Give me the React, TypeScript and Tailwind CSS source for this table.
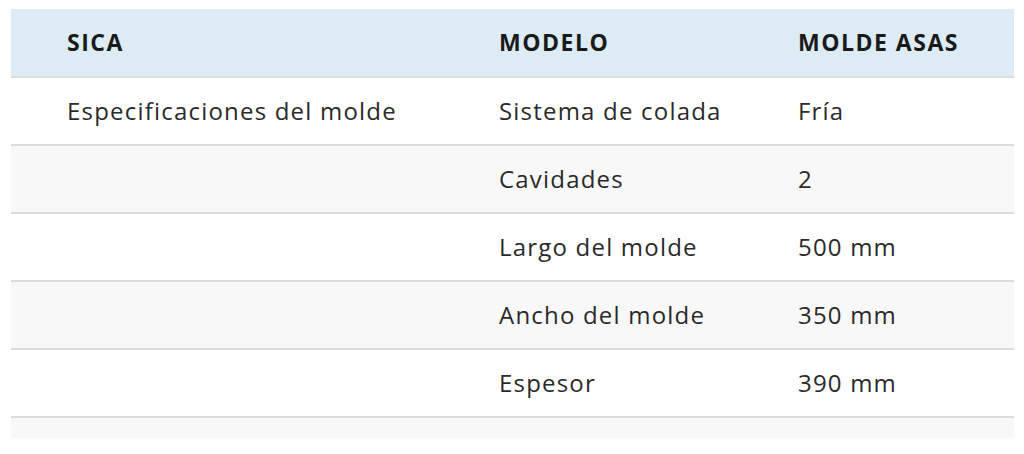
import React from "react";

const rows: [string, string, string][] = [
  ["Especificaciones del molde", "Sistema de colada", "Fría"],
  ["", "Cavidades", "2"],
  ["", "Largo del molde", "500 mm"],
  ["", "Ancho del molde", "350 mm"],
  ["", "Espesor", "390 mm"],
];

export default function App() {
  return (
    <div
      className="w-[1024px] h-[454px] bg-white pt-[9px] pl-[11px]"
      style={{ fontFamily: "'Open Sans', Lato, sans-serif" }}
    >
      <div className="w-[1003px] text-[#222222]">
        <div className="grid grid-cols-[432px_299px_272px] h-[69px] bg-[#dcebf4] border-b-2 border-[#dcdcdc] items-center text-[23px] leading-none font-bold tracking-[1.5px] text-[#1a1a1a]">
          <div className="pl-[56px]">SICA</div>
          <div className="pl-[56px]">MODELO</div>
          <div className="pl-[56px]">MOLDE ASAS</div>
        </div>
        {rows.map((r, i) => (
          <div
            key={i}
            className={`grid grid-cols-[432px_299px_272px] h-[68px] border-b-2 border-[#dcdcdc] items-center text-[24px] leading-none tracking-[1.2px] text-[#2a2a2a] ${
              i % 2 === 1 ? "bg-[#f8f8f8]" : "bg-white"
            }`}
          >
            <div className="pl-[56px]">{r[0]}</div>
            <div className="pl-[56px]">{r[1]}</div>
            <div className="pl-[56px]">{r[2]}</div>
          </div>
        ))}
        <div className="h-[20px] bg-[#f8f8f8]" />
      </div>
    </div>
  );
}
